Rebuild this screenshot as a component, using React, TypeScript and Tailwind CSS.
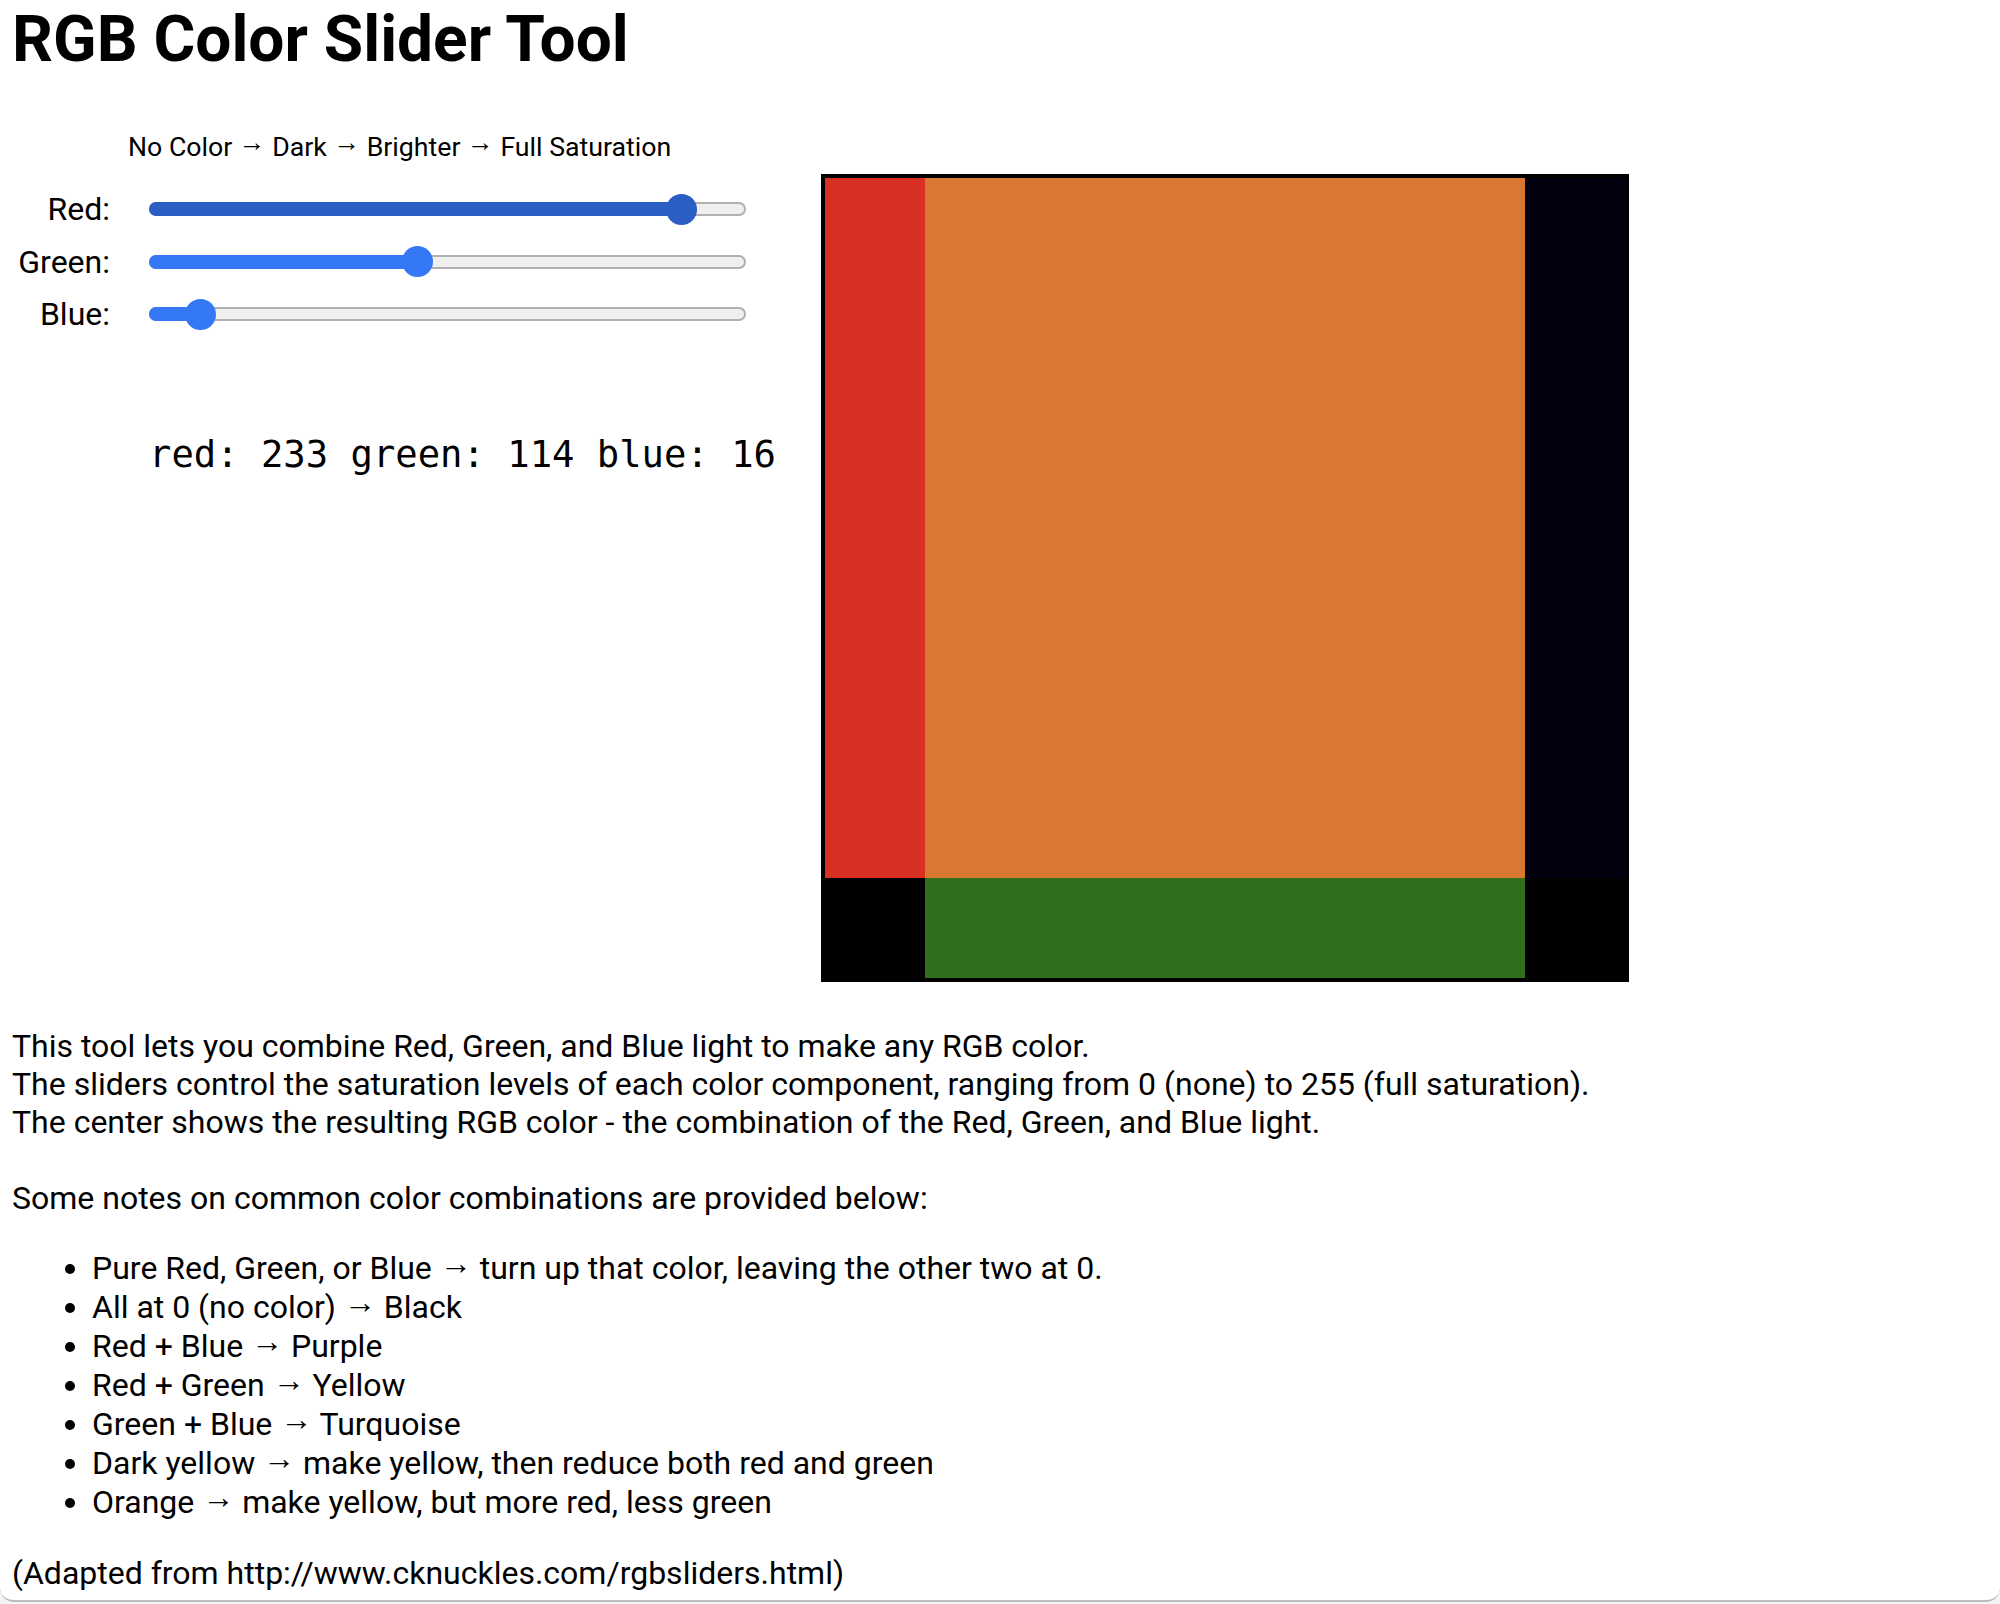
import React from 'react';

type SliderProps = {
  label: string;
  value: number;
  fillClass: string;
};

const TRACK_W = 597;
const THUMB = 31;

const Arrow: React.FC = () => (
  <span className="inline-block leading-[0.5em] -translate-y-[0.17em]">→</span>
);

const Slider: React.FC<SliderProps> = ({ label, value, fillClass }) => {
  const center = THUMB / 2 + (value / 255) * (TRACK_W - THUMB);
  return (
    <div className="flex h-[52.5px] items-center">
      <div className="w-[98px] text-right text-[32px] leading-[38px]">{label}</div>
      <div className="relative ml-[39px] h-[31px] w-[597px]">
        <div className="absolute left-0 right-0 top-[8.5px] h-[14px] rounded-full border-2 border-[#b0b0b0] bg-[#efefef]" />
        <div
          className={`absolute left-0 top-[8.5px] h-[14px] rounded-full ${fillClass}`}
          style={{ width: center }}
        />
        <div
          className={`absolute top-0 h-[31px] w-[31px] rounded-full ${fillClass}`}
          style={{ left: center - THUMB / 2 }}
        />
      </div>
    </div>
  );
};

const App: React.FC = () => {
  const red = 233;
  const green = 114;
  const blue = 16;

  return (
    <div className="min-h-[1604px] bg-[#f4f4f4]">
      <div className="h-[1602px] overflow-hidden rounded-b-[14px] border-b-2 border-[#bdbdbd] bg-white px-[12px] pt-[2px] text-black [font-family:Roboto,'Liberation_Sans',sans-serif]">
        <h1 className="text-[64px] font-bold leading-[75px]">RGB Color Slider Tool</h1>

        <div className="flex items-start">
          <div className="w-[809px]">
            <div className="mt-[54px] pl-[116px] text-[26.7px] leading-[33px]">
              No Color <Arrow /> Dark <Arrow /> Brighter <Arrow /> Full Saturation
            </div>
            <div className="mt-[19px]">
              <Slider label="Red:" value={red} fillClass="bg-[#2a5ec3]" />
              <Slider label="Green:" value={green} fillClass="bg-[#3478f6]" />
              <Slider label="Blue:" value={blue} fillClass="bg-[#3478f6]" />
            </div>
            <div className="mt-[91px] pl-[137px] text-[37.2px] leading-[44px] [font-family:'DejaVu_Sans_Mono','Liberation_Mono',monospace]">
              red: {red} green: {green} blue: {blue}
            </div>
          </div>

          <div className="mt-[97px] grid h-[808px] w-[808px] grid-cols-[100px_600px_100px] grid-rows-[700px_100px] border-4 border-black bg-black">
            <div className="bg-[#d93024]" />
            <div className="bg-[#da7832]" />
            <div className="bg-[#01000f]" />
            <div className="bg-black" />
            <div className="bg-[#306f1e]" />
            <div className="bg-black" />
          </div>
        </div>

        <p className="mt-[45px] text-[32px] leading-[38px]">
          This tool lets you combine Red, Green, and Blue light to make any RGB color.
          <br />
          The sliders control the saturation levels of each color component, ranging from 0 (none) to 255 (full saturation).
          <br />
          The center shows the resulting RGB color - the combination of the Red, Green, and Blue light.
          <br />
          <br />
          Some notes on common color combinations are provided below:
        </p>

        <ul className="my-[32px] list-disc pl-[80px] text-[32px] leading-[39px]">
          <li>Pure Red, Green, or Blue <Arrow /> turn up that color, leaving the other two at 0.</li>
          <li>All at 0 (no color) <Arrow /> Black</li>
          <li>Red + Blue <Arrow /> Purple</li>
          <li>Red + Green <Arrow /> Yellow</li>
          <li>Green + Blue <Arrow /> Turquoise</li>
          <li>Dark yellow <Arrow /> make yellow, then reduce both red and green</li>
          <li>Orange <Arrow /> make yellow, but more red, less green</li>
        </ul>

        <p className="text-[32px] leading-[38px]">(Adapted from http://www.cknuckles.com/rgbsliders.html)</p>
      </div>
    </div>
  );
};

export default App;
